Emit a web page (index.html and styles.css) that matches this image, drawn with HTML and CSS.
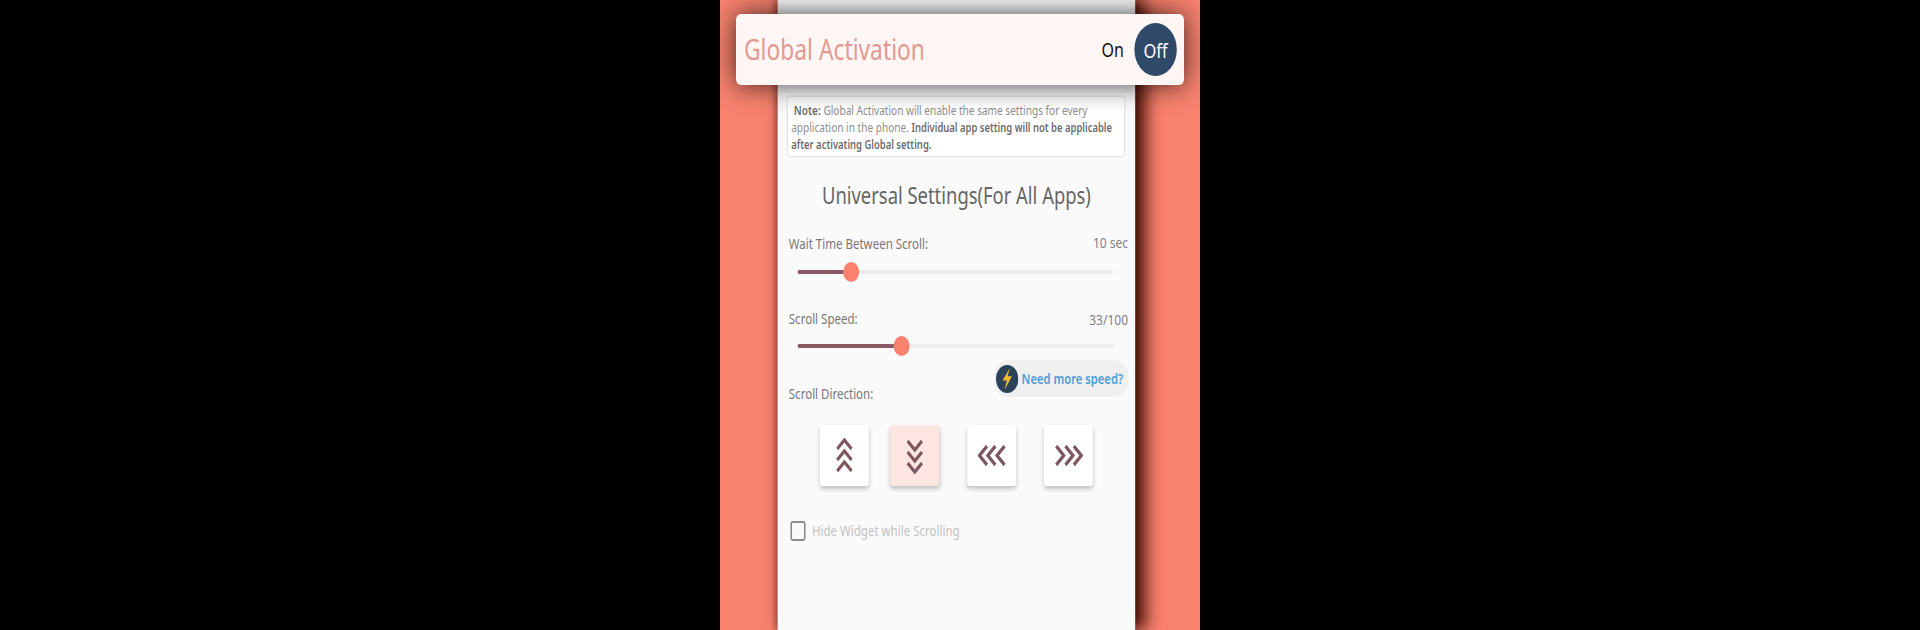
FILE: index.html
```html
<!DOCTYPE html>
<html lang="en">
<head>
<meta charset="utf-8">
<title>Global Activation</title>
<link rel="stylesheet" href="styles.css">
</head>
<body>
<div class="stage">
  <div class="screen">
    <header class="bar">
      <span class="bar-title">Global Activation</span>
      <span class="bar-on">On</span>
      <span class="bar-off">Off</span>
    </header>
    <main class="phone">
      <p class="note"><b class="note-lead">&nbsp;Note:</b> Global Activation will enable the same settings for every application in the phone. <b>Individual app setting will not be applicable after activating Global setting.</b></p>
      <h1 class="heading">Universal Settings(For All Apps)</h1>

      <div class="row row-first"><span>Wait Time Between Scroll:</span><span class="value value-raised">10 sec</span></div>
      <div class="slider"><div class="fill fill-wait"><span class="thumb"></span></div></div>

      <div class="row row-speed"><span>Scroll Speed:</span><span class="value">33/100</span></div>
      <div class="slider slider-speed"><div class="fill fill-speed"><span class="thumb"></span></div></div>

      <div class="row row-direction">
        <span class="direction-label">Scroll Direction:</span>
        <span class="pill">
          <svg class="bolt" viewBox="0 0 26 26" aria-hidden="true"><circle cx="13" cy="13" r="13" fill="#2b4259"/><path d="M16 3 7.500 14.500h5L10 23 18.500 10.500h-5z" fill="#f2bd2c"/></svg>
          <span>Need more speed?</span>
        </span>
      </div>

      <div class="dirs">
        <button class="dir dir-up" type="button"><svg class="chev-v" viewBox="0 0 22 36" aria-hidden="true"><path d="M2 11 11 2l9 9M2 22l9-9 9 9M2 33l9-9 9 9"/></svg></button>
        <button class="dir dir-active" type="button"><svg class="chev-v" viewBox="0 0 22 36" aria-hidden="true"><path d="m2 3 9 9 9-9M2 14l9 9 9-9M2 25l9 9 9-9"/></svg></button>
        <button class="dir" type="button"><svg class="chev-h" viewBox="0 0 34 22" aria-hidden="true"><path d="M11 2 2 11l9 9M21 2l-9 9 9 9M32 2l-9 9 9 9"/></svg></button>
        <button class="dir" type="button"><svg class="chev-h" viewBox="0 0 34 22" aria-hidden="true"><path d="m2 2 9 9-9 9M13 2l9 9-9 9M23 2l9 9-9 9"/></svg></button>
      </div>

      <label class="check"><span class="box"></span><span>Hide Widget while Scrolling</span></label>
    </main>
  </div>
</div>
</body>
</html>
```
FILE: styles.css
```css
* { box-sizing: border-box; }
html, body { margin: 0; height: 630px; overflow: hidden; background: #000; }
body { display: flex; justify-content: center; font-family: "Noto Sans", "Open Sans", sans-serif; }

.stage { width: 480px; height: 630px; overflow: hidden; background: #f8826e; }
.screen {
  position: relative;
  width: 600px;
  height: 630px;
  padding-left: 72px;
  transform: scaleX(0.8);
  transform-origin: 0 0;
}

.bar {
  position: absolute;
  z-index: 2;
  top: 14px;
  left: 20px;
  width: 560px;
  height: 71px;
  display: flex;
  align-items: center;
  padding: 0 9px 0 10px;
  background: #fdf6f5;
  border-radius: 6px;
  box-shadow: 0 0 30px rgba(0, 0, 0, .75);
}
.bar-title { flex: 1; font-size: 28.500px; color: #e3998f; transform: translateY(-1px); }
.bar-on { font-size: 20px; color: #111; margin-right: 13px; }
.bar-off {
  width: 53px;
  height: 53px;
  display: flex;
  align-items: center;
  justify-content: center;
  border-radius: 50%;
  background: #2e4a68;
  color: #fff;
  font-size: 20.500px;
}

.phone {
  width: 447px;
  height: 630px;
  padding-top: 97px;
  background: #fafafa;
  box-shadow: 12px 0 18px rgba(60, 10, 0, 1), -2px 0 8px rgba(40, 5, 0, .5);
}

.note {
  width: 420px;
  height: 59px;
  margin: 0 0 0 13px;
  padding: 6px 2px 0 4px;
  background: #fff;
  border-radius: 2px;
  box-shadow: 0 0 3px rgba(0, 0, 0, .25);
  font-size: 12.600px;
  line-height: 16px;
  color: #8f8f8f;
}
.note b { color: #6d6d6d; font-weight: 600; font-size: 11.800px; }
.note .note-lead { font-size: 12.600px; }

.heading {
  margin: 23px 0 0;
  text-align: center;
  font-size: 23px;
  line-height: 32px;
  font-weight: 400;
  color: #666;
}

.row {
  display: flex;
  justify-content: space-between;
  align-items: center;
  margin-left: 14px;
  margin-right: 9px;
  font-size: 14.400px;
  line-height: 20px;
  color: #777;
}
.row-first { margin-top: 23px; }
.row-speed { margin-top: 35px; }
.value { color: #80808e; font-size: 15px; }
.value-raised { transform: translateY(-2px); }

.slider {
  width: 395px;
  height: 4px;
  margin: 16px 0 0 25px;
  background: #ededed;
  border-radius: 2px;
}
.slider-speed { margin-top: 15px; }
.fill { position: relative; height: 4px; background: #8a5a64; border-radius: 2px; }
.fill-wait { width: 67px; }
.fill-speed { width: 130px; }
.thumb {
  position: absolute;
  right: -10px;
  top: -8px;
  width: 20px;
  height: 20px;
  border-radius: 50%;
  background: #f8826e;
}

.row-direction { margin-top: 12px; margin-right: 8px; align-items: flex-start; }
.direction-label { margin-top: 24px; }
.pill {
  display: flex;
  align-items: center;
  gap: 4px;
  width: 169px;
  height: 37px;
  padding-left: 3px;
  border-radius: 18px;
  background: #f0f0f0;
  color: #4f9cd9;
  font-size: 14px;
  font-weight: 600;
  white-space: nowrap;
}
.bolt { width: 28px; height: 28px; flex: none; }

.dirs { display: flex; gap: 35px; margin: 21px 0 0 53px; }
.dir {
  display: flex;
  align-items: center;
  justify-content: center;
  width: 61px;
  height: 61px;
  padding: 0;
  border: 0;
  border-radius: 3px;
  background: #fff;
  box-shadow: 0 3px 5px rgba(0, 0, 0, .22);
}
.dir-up { margin-right: -8px; }
.dir-active { background: #fde6e1; }
.dir svg { fill: none; stroke: #7e5660; stroke-width: 3.500; }
.chev-v { width: 23px; height: 36px; }
.chev-h { width: 36px; height: 23px; }

.check {
  display: flex;
  align-items: center;
  gap: 8px;
  margin: 35px 0 0 16px;
  color: #c2c2c2;
  font-size: 14.400px;
  line-height: 20px;
}
.box {
  width: 19px;
  height: 20px;
  border: 2.500px solid #8e8e8e;
  border-radius: 3px;
}
```
